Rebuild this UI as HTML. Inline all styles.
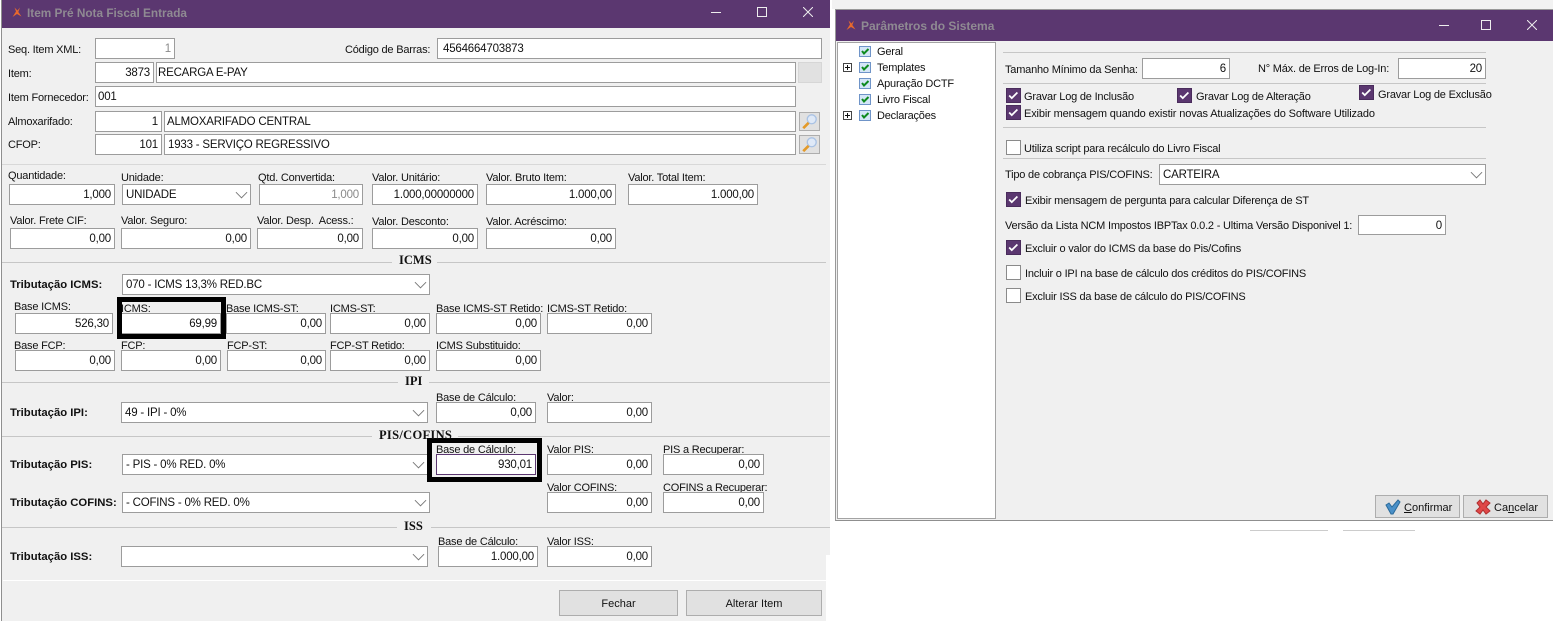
<!DOCTYPE html>
<html><head><meta charset="utf-8"><style>
html,body{margin:0;padding:0;background:#fff;width:1553px;height:621px;overflow:hidden}
body{position:relative;font:11px/14px "Liberation Sans",sans-serif;color:#111}
div,span,svg{position:absolute;box-sizing:border-box}
.l{white-space:nowrap;height:14px;letter-spacing:-.2px;font-size:11px;margin-top:1px}
.b{white-space:nowrap;height:14px;font-weight:bold;color:#111;font-size:11.3px;margin-top:1px}
.s{white-space:nowrap;height:15px;font:bold 12.5px/15px "Liberation Serif",serif;color:#111}
.i{background:#fff;border:1px solid #9c9c9c;height:21px;line-height:21px;white-space:nowrap;padding:0 3px;overflow:hidden;font-size:11.5px;letter-spacing:-.2px}
.r{text-align:right}
.g{color:#8a8a8a}
.sep{height:1px;background:#c6c6c6}
.w{height:1px;background:#fff}
.btn{background:#e1e1e1;border:1px solid #adadad;text-align:center}
.c{width:15px;height:15px;background:#5b3770;border:1px solid #4a2c5c}
.u{width:15px;height:15px;background:#fff;border:1px solid #8a8a8a}
.bt{font-size:11px;white-space:nowrap;height:14px;line-height:14px}
</style></head><body>
<svg width="0" height="0" style="position:absolute"><defs>
<symbol id="ck" viewBox="0 0 15 15"><path d="M2.500 7.500L5.500 10.500L12 4" fill="none" stroke="#fff" stroke-width="2"/></symbol>
<symbol id="ar" viewBox="0 0 14 8"><path d="M1 1L7 7L13 1" fill="none" stroke="#777" stroke-width="1"/></symbol>
<symbol id="lg" viewBox="0 0 10 10"><path d="M0.500 10L4 4.500L2.500 0.500L5.500 3.500L8 0.500L6.300 5L9.500 9.500L5 7Z" fill="#e8692c"/></symbol>
<symbol id="mg" viewBox="0 0 20 19"><circle cx="12.500" cy="7" r="5" fill="#dfe9f7" stroke="#a9c2e4" stroke-width="1.500"/><path d="M9 11L3 17" stroke="#e39a2a" stroke-width="3"/></symbol>
<symbol id="tc" viewBox="0 0 12 11"><rect x=".5" y=".5" width="11" height="10" fill="#d4e6f7" stroke="#6f94c8"/><path d="M3 5L5 7.500L9.500 3" fill="none" stroke="#0e8a1e" stroke-width="2"/></symbol>
<symbol id="pl" viewBox="0 0 9 9"><rect x=".5" y=".5" width="8" height="8" fill="#fff" stroke="#444"/><path d="M2 4.500H7M4.500 2V7" stroke="#111"/></symbol>
</defs></svg>

<!-- LEFT WINDOW -->
<div style="left:1px;top:0;width:829px;height:555px;background:#f0f0f0"></div>
<div style="left:1px;top:555px;width:825px;height:66px;background:#f0f0f0"></div>
<div style="left:1px;top:0;width:1px;height:621px;background:#8f8f8f"></div>
<div style="left:2px;top:0;width:828px;height:28px;background:#5b3770"></div>
<svg style="left:12px;top:7px" width="10" height="10"><use href="#lg"/></svg>
<div class="b" style="left:27px;top:5px;color:#8f8a92;font-size:11.800px;line-height:14px">Item Pré Nota Fiscal Entrada</div>
<div style="left:711px;top:12px;width:10px;height:1px;background:#eee"></div>
<div style="left:757px;top:7px;width:10px;height:10px;border:1px solid #eee"></div>
<svg style="left:803px;top:7px" width="10" height="10"><path d="M0 0L10 10M10 0L0 10" stroke="#eee" stroke-width="1"/></svg>

<div class="l" style="left:8px;top:42px">Seq. Item XML:</div>
<div class="i r g" style="left:95px;top:38px;width:80px">1</div>
<div class="l" style="left:345px;top:42px">Código de Barras:</div>
<div class="i" style="left:437px;top:38px;width:385px;padding-left:5px">4564664703873</div>
<div class="l" style="left:8px;top:66px">Item:</div>
<div class="i r" style="left:95px;top:62px;width:59px">3873</div>
<div class="i" style="left:156px;top:62px;width:640px;padding-left:1px">RECARGA E-PAY</div>
<div class="btn" style="left:798px;top:62px;width:24px;height:21px;border-color:#d6d6d6"></div>
<div class="l" style="left:8px;top:90px">Item Fornecedor:</div>
<div class="i" style="left:95px;top:86px;width:701px;padding-left:2px">001</div>
<div class="l" style="left:8px;top:114px">Almoxarifado:</div>
<div class="i r" style="left:95px;top:111px;width:67px">1</div>
<div class="i" style="left:164px;top:111px;width:632px;padding-left:2px">ALMOXARIFADO CENTRAL</div>
<div class="btn" style="left:799px;top:112px;width:21px;height:19px"><svg style="left:0;top:0" width="19" height="17"><use href="#mg"/></svg></div>
<div class="l" style="left:8px;top:137px">CFOP:</div>
<div class="i r" style="left:95px;top:134px;width:67px">101</div>
<div class="i" style="left:164px;top:134px;width:632px;padding-left:3px">1933 - SERVIÇO REGRESSIVO</div>
<div class="btn" style="left:799px;top:135px;width:21px;height:19px"><svg style="left:0;top:0" width="19" height="17"><use href="#mg"/></svg></div>
<div class="sep" style="left:2px;top:164px;width:824px;background:#d8d8d8"></div>

<div class="l" style="left:8px;top:168px">Quantidade:</div>
<div class="i r" style="left:9px;top:184px;width:106px">1,000</div>
<div class="l" style="left:121px;top:170px">Unidade:</div>
<div class="i" style="left:122px;top:184px;width:129px">UNIDADE<svg style="left:112px;top:6px" width="13" height="8"><use href="#ar"/></svg></div>
<div class="l" style="left:258px;top:170px">Qtd. Convertida:</div>
<div class="i r g" style="left:259px;top:184px;width:104px">1,000</div>
<div class="l" style="left:372px;top:170px">Valor. Unitário:</div>
<div class="i r" style="left:372px;top:184px;width:106px">1.000,00000000</div>
<div class="l" style="left:486px;top:170px">Valor. Bruto Item:</div>
<div class="i r" style="left:486px;top:184px;width:130px">1.000,00</div>
<div class="l" style="left:628px;top:170px">Valor. Total Item:</div>
<div class="i r" style="left:628px;top:184px;width:130px">1.000,00</div>

<div class="l" style="left:10px;top:213px">Valor. Frete CIF:</div>
<div class="i r" style="left:10px;top:228px;width:105px">0,00</div>
<div class="l" style="left:121px;top:213px">Valor. Seguro:</div>
<div class="i r" style="left:121px;top:228px;width:130px">0,00</div>
<div class="l" style="left:257px;top:213px">Valor. Desp.&nbsp; Acess.:</div>
<div class="i r" style="left:257px;top:228px;width:106px">0,00</div>
<div class="l" style="left:372px;top:214px">Valor. Desconto:</div>
<div class="i r" style="left:372px;top:228px;width:106px">0,00</div>
<div class="l" style="left:486px;top:214px">Valor. Acréscimo:</div>
<div class="i r" style="left:486px;top:228px;width:130px">0,00</div>

<div class="sep" style="left:2px;top:262px;width:390px"></div>
<div class="s" style="left:399px;top:253px">ICMS</div>
<div class="sep" style="left:437px;top:262px;width:389px"></div>

<div class="b" style="left:10px;top:277px">Tributação ICMS:</div>
<div class="i" style="left:122px;top:274px;width:308px">070 - ICMS 13,3% RED.BC<svg style="left:291px;top:6px" width="13" height="8"><use href="#ar"/></svg></div>
<div class="l" style="left:14px;top:299px">Base ICMS:</div>
<div class="i r" style="left:15px;top:313px;width:98px">526,30</div>
<div class="l" style="left:121px;top:301px">ICMS:</div>
<div class="i r" style="left:121px;top:313px;width:100px">69,99</div>
<div class="i r" style="left:226px;top:313px;width:100px">0,00</div>
<div class="l" style="left:226px;top:301px">Base ICMS-ST:</div>
<div class="l" style="left:330px;top:301px">ICMS-ST:</div>
<div class="i r" style="left:330px;top:313px;width:100px">0,00</div>
<div class="l" style="left:436px;top:301px">Base ICMS-ST Retido:</div>
<div class="i r" style="left:436px;top:313px;width:105px">0,00</div>
<div class="l" style="left:547px;top:301px">ICMS-ST Retido:</div>
<div class="i r" style="left:547px;top:313px;width:105px">0,00</div>
<div style="left:117px;top:297px;width:109px;height:42px;border:5px solid #000"></div>

<div class="l" style="left:14px;top:338px">Base FCP:</div>
<div class="i r" style="left:15px;top:350px;width:100px">0,00</div>
<div class="l" style="left:121px;top:338px">FCP:</div>
<div class="i r" style="left:121px;top:350px;width:100px">0,00</div>
<div class="l" style="left:227px;top:338px">FCP-ST:</div>
<div class="i r" style="left:227px;top:350px;width:99px">0,00</div>
<div class="l" style="left:330px;top:338px">FCP-ST Retido:</div>
<div class="i r" style="left:330px;top:350px;width:100px">0,00</div>
<div class="l" style="left:436px;top:338px">ICMS Substituido:</div>
<div class="i r" style="left:436px;top:350px;width:105px">0,00</div>

<div class="sep" style="left:2px;top:382px;width:396px"></div>
<div class="s" style="left:405px;top:374px">IPI</div>
<div class="sep" style="left:429px;top:382px;width:401px"></div>
<div class="b" style="left:10px;top:405px">Tributação IPI:</div>
<div class="i" style="left:121px;top:402px;width:307px">49 - IPI - 0%<svg style="left:290px;top:6px" width="13" height="8"><use href="#ar"/></svg></div>
<div class="l" style="left:436px;top:390px">Base de Cálculo:</div>
<div class="i r" style="left:436px;top:402px;width:100px">0,00</div>
<div class="l" style="left:547px;top:390px">Valor:</div>
<div class="i r" style="left:547px;top:402px;width:105px">0,00</div>

<div class="sep" style="left:2px;top:436px;width:370px"></div>
<div class="sep" style="left:458px;top:436px;width:372px"></div>
<div class="b" style="left:10px;top:457px">Tributação PIS:</div>
<div class="i" style="left:122px;top:454px;width:306px">- PIS - 0% RED. 0%<svg style="left:289px;top:6px" width="13" height="8"><use href="#ar"/></svg></div>
<div style="left:427px;top:438px;width:115px;height:44px;border:5px solid #000"></div>
<div class="s" style="left:379px;top:428px;letter-spacing:.3px">PIS/COFINS</div>
<div class="l" style="left:436px;top:442px">Base de Cálculo:</div>
<div class="i r" style="left:436px;top:454px;width:100px;border-color:#5b3770">930,01</div>
<div class="l" style="left:547px;top:442px">Valor PIS:</div>
<div class="i r" style="left:547px;top:454px;width:105px">0,00</div>
<div class="l" style="left:663px;top:442px">PIS a Recuperar:</div>
<div class="i r" style="left:663px;top:454px;width:101px">0,00</div>

<div class="b" style="left:10px;top:495px">Tributação COFINS:</div>
<div class="i" style="left:122px;top:492px;width:308px">- COFINS - 0% RED. 0%<svg style="left:291px;top:6px" width="13" height="8"><use href="#ar"/></svg></div>
<div class="l" style="left:547px;top:480px">Valor COFINS:</div>
<div class="i r" style="left:547px;top:492px;width:105px">0,00</div>
<div class="l" style="left:663px;top:480px">COFINS a Recuperar:</div>
<div class="i r" style="left:663px;top:492px;width:101px">0,00</div>

<div class="sep" style="left:2px;top:527px;width:395px"></div>
<div class="s" style="left:404px;top:519px">ISS</div>
<div class="sep" style="left:431px;top:527px;width:399px"></div>
<div class="b" style="left:10px;top:549px">Tributação ISS:</div>
<div class="i" style="left:121px;top:546px;width:307px"><svg style="left:290px;top:6px" width="13" height="8"><use href="#ar"/></svg></div>
<div class="l" style="left:438px;top:534px">Base de Cálculo:</div>
<div class="i r" style="left:438px;top:546px;width:100px">1.000,00</div>
<div class="l" style="left:547px;top:534px">Valor ISS:</div>
<div class="i r" style="left:547px;top:546px;width:105px">0,00</div>
<div class="w" style="left:3px;top:580px;width:823px"></div>
<div class="btn" style="left:559px;top:590px;width:119px;height:26px;line-height:26px">Fechar</div>
<div class="btn" style="left:686px;top:590px;width:136px;height:26px;line-height:26px">Alterar Item</div>

<!-- RIGHT WINDOW -->
<div style="left:832px;top:0;width:721px;height:9px;background:#f2f2f2"></div>
<div style="left:835px;top:9px;width:718px;height:512px;background:#f0f0f0;border-top:1px solid #999;border-left:1px solid #999;border-bottom:1px solid #8f8f8f"></div>
<div style="left:836px;top:10px;width:717px;height:31px;background:#5b3770"></div>
<svg style="left:846px;top:20px" width="10" height="10"><use href="#lg"/></svg>
<div class="b" style="left:861px;top:18px;color:#8f8a92;font-size:12px">Parâmetros do Sistema</div>
<div style="left:1439px;top:25px;width:10px;height:1px;background:#eee"></div>
<div style="left:1481px;top:20px;width:10px;height:10px;border:1px solid #eee"></div>
<svg style="left:1527px;top:20px" width="10" height="10"><path d="M0 0L10 10M10 0L0 10" stroke="#eee" stroke-width="1"/></svg>

<div style="left:837px;top:42px;width:159px;height:477px;background:#fff;border:1px solid #a3a3a3"></div>
<svg style="left:859px;top:46px" width="12" height="11"><use href="#tc"/></svg><div class="l" style="left:877px;top:44px">Geral</div>
<svg style="left:843px;top:63px" width="9" height="9"><use href="#pl"/></svg><svg style="left:859px;top:62px" width="12" height="11"><use href="#tc"/></svg><div class="l" style="left:877px;top:60px">Templates</div>
<svg style="left:859px;top:78px" width="12" height="11"><use href="#tc"/></svg><div class="l" style="left:877px;top:76px">Apuração DCTF</div>
<svg style="left:859px;top:94px" width="12" height="11"><use href="#tc"/></svg><div class="l" style="left:877px;top:92px">Livro Fiscal</div>
<svg style="left:843px;top:111px" width="9" height="9"><use href="#pl"/></svg><svg style="left:859px;top:110px" width="12" height="11"><use href="#tc"/></svg><div class="l" style="left:877px;top:108px">Declarações</div>

<div class="sep" style="left:1003px;top:52px;width:483px"></div>
<div class="sep" style="left:1003px;top:83px;width:483px"></div>
<div class="sep" style="left:1003px;top:127px;width:483px"></div>
<div class="sep" style="left:1003px;top:158px;width:483px"></div>

<div class="l" style="left:1005px;top:62px">Tamanho Mínimo da Senha:</div>
<div class="i r" style="left:1142px;top:58px;width:88px">6</div>
<div class="l" style="left:1258px;top:61px">N° Máx. de Erros de Log-In:</div>
<div class="i r" style="left:1398px;top:58px;width:88px">20</div>

<div class="c" style="left:1006px;top:88px"><svg style="left:0;top:0" width="13" height="13" viewBox="0 0 15 15"><use href="#ck"/></svg></div>
<div class="l" style="left:1024px;top:89px">Gravar Log de Inclusão</div>
<div class="c" style="left:1177px;top:88px"><svg style="left:0;top:0" width="13" height="13" viewBox="0 0 15 15"><use href="#ck"/></svg></div>
<div class="l" style="left:1196px;top:89px">Gravar Log de Alteração</div>
<div class="c" style="left:1359px;top:85px"><svg style="left:0;top:0" width="13" height="13" viewBox="0 0 15 15"><use href="#ck"/></svg></div>
<div class="l" style="left:1378px;top:87px">Gravar Log de Exclusão</div>
<div class="c" style="left:1006px;top:105px"><svg style="left:0;top:0" width="13" height="13" viewBox="0 0 15 15"><use href="#ck"/></svg></div>
<div class="l" style="left:1024px;top:106px;width:351px;overflow:hidden;letter-spacing:-.14px">Exibir mensagem quando existir novas Atualizações do Software Utilizado</div>

<div class="u" style="left:1006px;top:140px"></div>
<div class="l" style="left:1024px;top:141px">Utiliza script para recálculo do Livro Fiscal</div>
<div class="l" style="left:1005px;top:167px">Tipo de cobrança PIS/COFINS:</div>
<div class="i" style="left:1159px;top:164px;width:327px">CARTEIRA<svg style="left:310px;top:6px" width="13" height="8"><use href="#ar"/></svg></div>
<div class="c" style="left:1006px;top:192px"><svg style="left:0;top:0" width="13" height="13" viewBox="0 0 15 15"><use href="#ck"/></svg></div>
<div class="l" style="left:1025px;top:193px">Exibir mensagem de pergunta para calcular Diferença de ST</div>
<div class="l" style="left:1005px;top:218px">Versão da Lista NCM Impostos IBPTax 0.0.2 - Ultima Versão Disponivel 1:</div>
<div class="i r" style="left:1358px;top:215px;width:88px;height:20px;line-height:20px">0</div>
<div class="c" style="left:1006px;top:240px"><svg style="left:0;top:0" width="13" height="13" viewBox="0 0 15 15"><use href="#ck"/></svg></div>
<div class="l" style="left:1025px;top:241px">Excluir o valor do ICMS da base do Pis/Cofins</div>
<div class="u" style="left:1006px;top:265px"></div>
<div class="l" style="left:1025px;top:266px">Incluir o IPI na base de cálculo dos créditos do PIS/COFINS</div>
<div class="u" style="left:1006px;top:288px"></div>
<div class="l" style="left:1025px;top:289px">Excluir ISS da base de cálculo do PIS/COFINS</div>

<div class="btn" style="left:1375px;top:495px;width:85px;height:23px">
<svg style="left:9px;top:3px" width="16" height="16"><path d="M1 6L4 4L7 8L13 1L15 3L8 15H6Z" fill="#4a90c8" stroke="#2a6a9a"/></svg>
<div class="bt" style="left:28px;top:5px"><u>C</u>onfirmar</div></div>
<div class="btn" style="left:1463px;top:495px;width:85px;height:23px">
<svg style="left:11px;top:3px" width="16" height="16"><path d="M2 4L5 1L8 5L11 1L15 4L11 8L15 12L11 15L8 11L5 15L1 12L5 8Z" fill="#e04848" stroke="#b03030"/></svg>
<div class="bt" style="left:30px;top:5px">Ca<u>n</u>celar</div></div>
<div style="left:1250px;top:530px;width:78px;height:1px;background:#ccc"></div>
<div style="left:1343px;top:530px;width:72px;height:1px;background:#ccc"></div>
</body></html>
